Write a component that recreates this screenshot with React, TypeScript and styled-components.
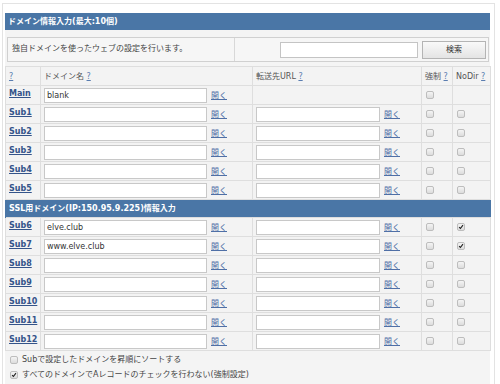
import * as React from 'react';
import styled, { createGlobalStyle } from 'styled-components';

const GlobalStyle = createGlobalStyle`
  body {
    margin: 0;
    background: #ffffff;
    font-family: "DejaVu Sans", "Noto Sans CJK JP", sans-serif;
    font-size: 8px;
    line-height: 11px;
    color: #333333;
  }
`;

const blue = '#4a76a6';

interface DomainRow {
  label: string;
  domain: string;
  noDir: boolean;
}

const mainRows: DomainRow[] = [
  { label: 'Sub1', domain: '', noDir: false },
  { label: 'Sub2', domain: '', noDir: false },
  { label: 'Sub3', domain: '', noDir: false },
  { label: 'Sub4', domain: '', noDir: false },
  { label: 'Sub5', domain: '', noDir: false },
];

const sslRows: DomainRow[] = [
  { label: 'Sub6', domain: 'elve.club', noDir: true },
  { label: 'Sub7', domain: 'www.elve.club', noDir: true },
  { label: 'Sub8', domain: '', noDir: false },
  { label: 'Sub9', domain: '', noDir: false },
  { label: 'Sub10', domain: '', noDir: false },
  { label: 'Sub11', domain: '', noDir: false },
  { label: 'Sub12', domain: '', noDir: false },
];

const Check: React.FC<{ checked?: boolean }> = ({ checked }) => (
  <Box>
    {checked ? (
      <svg width="8" height="8" viewBox="0 0 8 8">
        <path d="M1.5 4.2 L3.2 6 L6.6 1.6" stroke="#222" strokeWidth="1.5" fill="none" />
      </svg>
    ) : null}
  </Box>
);

const Row: React.FC<{ row: DomainRow }> = ({ row }) => (
  <tr>
    <LabelCell>
      <LabelLink>{row.label}</LabelLink>
    </LabelCell>
    <Cell>
      <InputWrap>
        <DomainInput defaultValue={row.domain} />
        <OpenLink>開く</OpenLink>
      </InputWrap>
    </Cell>
    <Cell>
      <InputWrap>
        <UrlInput />
        <OpenLink>開く</OpenLink>
      </InputWrap>
    </Cell>
    <CheckCell>
      <Check />
    </CheckCell>
    <CheckCell>
      <Check checked={row.noDir} />
    </CheckCell>
  </tr>
);

export default function App() {
  return (
    <>
      <GlobalStyle />
      <Panel>
        <Title>ドメイン情報入力(最大:10個)</Title>
        <Body>
          <Desc>
            <DescText>独自ドメインを使ったウェブの設定を行います。</DescText>
            <SearchBox>
              <SearchInput />
              <Button>検索</Button>
            </SearchBox>
          </Desc>
          <Table>
            <colgroup>
              <col style={{ width: 35 }} />
              <col style={{ width: 212 }} />
              <col style={{ width: 169 }} />
              <col style={{ width: 31 }} />
              <col />
            </colgroup>
            <tbody>
              <tr>
                <HeadCell>
                  <Help>?</Help>
                </HeadCell>
                <HeadCell>
                  ドメイン名 <Help>?</Help>
                </HeadCell>
                <HeadCell>
                  転送先URL <Help>?</Help>
                </HeadCell>
                <HeadCell>
                  強制 <Help>?</Help>
                </HeadCell>
                <HeadCell>
                  NoDir <Help>?</Help>
                </HeadCell>
              </tr>
              <tr>
                <LabelCell>
                  <LabelLink>Main</LabelLink>
                </LabelCell>
                <Cell>
                  <InputWrap>
                    <DomainInput defaultValue="blank" />
                    <OpenLink>開く</OpenLink>
                  </InputWrap>
                </Cell>
                <Cell />
                <CheckCell>
                  <Check />
                </CheckCell>
                <CheckCell />
              </tr>
              {mainRows.map(r => (
                <Row key={r.label} row={r} />
              ))}
              <tr>
                <SectionCell colSpan={5}>SSL用ドメイン(IP:150.95.9.225)情報入力</SectionCell>
              </tr>
              {sslRows.map(r => (
                <Row key={r.label} row={r} />
              ))}
            </tbody>
          </Table>
          <Options>
            <Option>
              <Check />
              Subで設定したドメインを昇順にソートする
            </Option>
            <Option>
              <Check checked />
              すべてのドメインでAレコードのチェックを行わない(強制設定)
            </Option>
          </Options>
        </Body>
      </Panel>
    </>
  );
}

const Panel = styled.div`
  margin: 3px 0 0 2px;
  width: 493px;
  height: 400px;
  box-sizing: border-box;
  border: 1px solid #e3e3e3;
  padding: 9px 4px 0 2px;
  background: #ffffff;
`;

const Title = styled.div`
  height: 17px;
  line-height: 17px;
  background: ${blue};
  color: #ffffff;
  font-weight: bold;
  padding-left: 3px;
`;

const Body = styled.div`
  background: #f4f4f4;
  padding-top: 7px;
  height: 360px;
`;

const Desc = styled.div`
  display: flex;
  margin: 0 1px 0 2px;
  height: 25px;
  box-sizing: border-box;
  border: 1px solid #d0d0d0;
  background: #f6f6f6;
`;

const DescText = styled.div`
  width: 222px;
  border-right: 1px solid #d8d8d8;
  padding-left: 4px;
  line-height: 22px;
  color: #444444;
`;

const SearchBox = styled.div`
  flex: 1;
  display: flex;
  align-items: center;
  justify-content: flex-end;
  gap: 4px;
  padding-right: 2px;
`;

const SearchInput = styled.input`
  width: 138px;
  height: 16px;
  box-sizing: border-box;
  border: 1px solid #c4c4c4;
  background: #ffffff;
  padding: 0 3px;
  outline: none;
`;

const Button = styled.div`
  width: 64px;
  height: 18px;
  box-sizing: border-box;
  border: 1px solid #b4b4b4;
  background: linear-gradient(#f9f9f9, #e4e4e4);
  text-align: center;
  line-height: 16px;
  color: #333333;
`;

const Table = styled.table`
  border-collapse: collapse;
  table-layout: fixed;
  width: 486px;
  margin-top: 4px;
`;

const Cell = styled.td`
  height: 19px;
  box-sizing: border-box;
  padding: 0 0 0 3px;
  border: 1px solid #dedede;
  background: #f3f3f3;
  vertical-align: middle;
  line-height: 11px;
`;

const HeadCell = styled(Cell)`
  color: #555555;
  padding-left: 3px;
`;

const LabelCell = styled(Cell)`
  vertical-align: top;
  padding-top: 2px;
`;

const CheckCell = styled(Cell)`
  padding-left: 4px;
`;

const SectionCell = styled.td`
  height: 18px;
  box-sizing: border-box;
  padding: 0 0 0 3px;
  background: ${blue};
  color: #ffffff;
  font-weight: bold;
  border-left: 1px solid ${blue};
`;

const LabelLink = styled.span`
  color: #34548a;
  font-weight: bold;
  text-decoration: underline;
`;

const Help = styled.span`
  color: #5a7db0;
  text-decoration: underline;
`;

const InputWrap = styled.div`
  display: flex;
  align-items: center;
  gap: 4px;
  height: 15px;
`;

const DomainInput = styled.input`
  display: block;
  width: 163px;
  height: 15px;
  margin: 0;
  box-sizing: border-box;
  border: 1px solid #c8c8c8;
  background: #ffffff;
  padding: 0 2px;
  font-family: "DejaVu Sans", sans-serif;
  font-size: 8px;
  line-height: 11px;
  color: #333333;
  outline: none;
`;

const UrlInput = styled(DomainInput)`
  width: 124px;
`;

const OpenLink = styled.span`
  color: #4f6fa6;
  text-decoration: underline;
`;

const Box = styled.span`
  display: inline-flex;
  align-items: center;
  justify-content: center;
  width: 8px;
  height: 8px;
  box-sizing: border-box;
  border: 1px solid #bdbdbd;
  border-radius: 2px;
  background: linear-gradient(#f4f4f4, #dcdcdc);
  vertical-align: middle;
`;

const Options = styled.div`
  display: flex;
  flex-direction: column;
  gap: 6px;
  padding: 4px 0 0 5px;
  color: #444444;
`;

const Option = styled.div`
  display: flex;
  align-items: center;
  gap: 4px;
  height: 9px;
`;
